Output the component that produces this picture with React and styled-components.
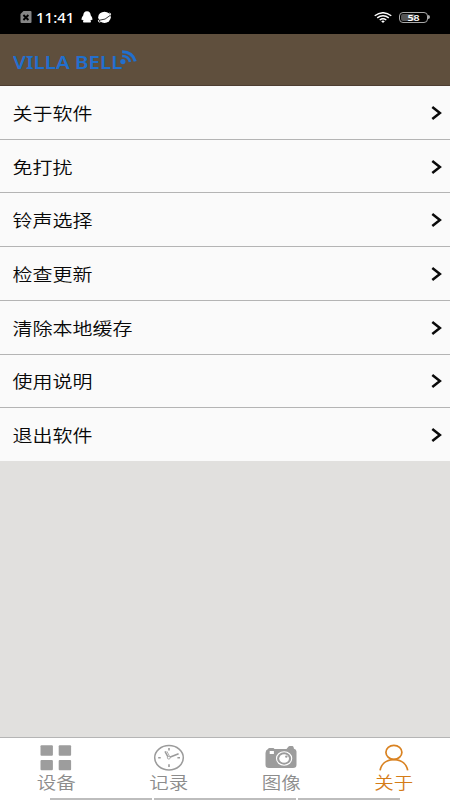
import React from 'react'
import styled, { createGlobalStyle } from 'styled-components'

const rows = ['关于软件', '免打扰', '铃声选择', '检查更新', '清除本地缓存', '使用说明', '退出软件']

const tabs = [
  { label: '设备', Icon: GridIcon },
  { label: '记录', Icon: ClockIcon },
  { label: '图像', Icon: CameraIcon },
  { label: '关于', Icon: PersonIcon, active: true },
]

export default function App() {
  return (
    <Screen>
      <GlobalStyle />
      <StatusBar>
        <SimIcon />
        <Time>11:41</Time>
        <PenguinIcon />
        <PlanetIcon />
        <Spacer />
        <WifiIcon />
        <Battery>
          <BatteryBody>
            <BatteryLevel />
            <BatteryText>58</BatteryText>
          </BatteryBody>
          <BatteryTip />
        </Battery>
      </StatusBar>
      <Header>
        <Brand>VILLA BELL</Brand>
        <SignalIcon />
      </Header>
      <List>
        {rows.map((row) => (
          <Row key={row}>
            <RowLabel>{row}</RowLabel>
            <ChevronIcon />
          </Row>
        ))}
      </List>
      <TabBar>
        {tabs.map(({ label, Icon, active }) => (
          <Tab key={label} $active={active}>
            <Icon />
            <TabLabel>{label}</TabLabel>
          </Tab>
        ))}
      </TabBar>
      <NavHints>
        <NavHint $width={102} />
        <NavHint $width={142} />
        <NavHint $width={102} />
      </NavHints>
    </Screen>
  )
}

function SimIcon() {
  return (
    <svg width="12" height="14" viewBox="0 0 12 14">
      <path d="M3.5 1H10.5Q11.5 1 11.5 2V12Q11.5 13 10.5 13H1.5Q.5 13 .5 12V4Z" fill="#858585" />
      <path d="M3.4 5L8.4 10M8.4 5L3.4 10" stroke="#000" strokeWidth="1.9" />
    </svg>
  )
}

function PenguinIcon() {
  return (
    <Penguin width="12" height="12" viewBox="0 0 12 12">
      <path
        d="M6 .3C8.5.3 9.7 2 9.7 4.3C11 6 11.6 7.4 11.4 8.8C11.2 9.5 10.5 9.2 10.1 8.8L9.5 9.7C10.2 10.2 10.2 11.2 9.2 11.5H2.8C1.8 11.2 1.8 10.2 2.5 9.7L1.9 8.8C1.5 9.2 .8 9.5.6 8.8C.4 7.4 1 6 2.3 4.3C2.3 2 3.5.3 6 .3Z"
        fill="#fff"
      />
    </Penguin>
  )
}

function PlanetIcon() {
  return (
    <Planet width="15" height="13" viewBox="0 0 15 13">
      <ellipse cx="7.5" cy="6.3" rx="6.3" ry="5.6" fill="#fff" />
      <path d="M1.4 9Q.8 11.2 3.2 11.3M12.2 2Q14 2 13.6 4" stroke="#fff" strokeWidth=".9" fill="none" />
      <path d="M2 9.3Q8.5 9.3 13.2 4.4" stroke="#000" strokeWidth=".8" fill="none" />
    </Planet>
  )
}

function WifiIcon() {
  return (
    <Wifi width="18" height="11" viewBox="0 0 18 11">
      <g fill="none" stroke="#fff" strokeWidth="1.4">
        <path d="M.7 3.7Q9-2.3 17.3 3.7" />
        <path d="M3.2 5.9Q9 1.5 14.8 5.9" />
        <path d="M5.7 8Q9 5.4 12.3 8" />
      </g>
      <path d="M7.2 9.2Q9 7.8 10.8 9.2L9 10.9Z" fill="#fff" />
    </Wifi>
  )
}

function SignalIcon() {
  return (
    <Signal width="20" height="18" viewBox="0 0 20 18">
      <circle cx="4.8" cy="12.6" r="2.6" fill="#226fce" />
      <g fill="none" stroke="#226fce">
        <path d="M4.1 7.1Q10.6 7.3 11.9 13" strokeWidth="2.5" />
        <path d="M4.1 2.7Q14.6 2.8 17.2 12.4" strokeWidth="3" />
      </g>
    </Signal>
  )
}

function ChevronIcon() {
  return (
    <svg width="11" height="14" viewBox="0 0 11 14">
      <path d="M1.3 1L8.9 7L1.3 13" fill="none" stroke="#0a0a0a" strokeWidth="2.5" />
    </svg>
  )
}

function GridIcon() {
  return (
    <svg width="32" height="28" viewBox="0 0 32 28">
      <g fill="#9d9d9d">
        <rect x=".5" y="1.2" width="12.4" height="10.5" rx="1" />
        <rect x="18.7" y="1.2" width="12.4" height="10.5" rx="1" />
        <rect x=".5" y="16" width="12.4" height="10.3" rx="1" />
        <rect x="18.7" y="16" width="12.4" height="10.3" rx="1" />
      </g>
    </svg>
  )
}

function ClockIcon() {
  return (
    <svg width="32" height="28" viewBox="0 0 32 28">
      <g fill="none" stroke="#9b9b9b">
        <ellipse cx="16" cy="13.7" rx="14.3" ry="12.2" strokeWidth="1.5" />
        <path d="M12 7.4L15.4 13.8L25.6 9.8" strokeWidth="1.5" />
        <path d="M13.8 7.2L16.4 12" strokeWidth=".8" />
        <circle cx="15.8" cy="13.7" r="1.4" strokeWidth=".8" fill="#fff" />
        <path d="M16 4V6.6M16 20.3V23M5.2 13.7H7.7M24.4 13.7H27" strokeWidth="1.6" />
      </g>
    </svg>
  )
}

function CameraIcon() {
  return (
    <svg width="32" height="28" viewBox="0 0 32 28">
      <path
        d="M3 5Q3.4 4 4.5 4H8.5L9.5 5H21.5L23.3 2.7Q23.8 2 24.8 2H27.2Q28.2 2 28.5 3L29 4.8Q31.5 5.2 31.5 7.5V20.8Q31.5 24 28 24H4Q.5 24 .5 20.8V9Q.5 6 3 5Z"
        fill="#9c9c9c"
      />
      <rect x="4.7" y="7" width="4.2" height="3" fill="#fff" />
      <ellipse cx="19.1" cy="14.5" rx="7.6" ry="6.7" fill="none" stroke="#fff" strokeWidth="1.1" />
      <ellipse cx="19.1" cy="14.5" rx="4.9" ry="4.3" fill="#fff" />
      <circle cx="21.3" cy="12.6" r="1.2" fill="#9c9c9c" />
    </svg>
  )
}

function PersonIcon() {
  return (
    <svg width="32" height="28" viewBox="0 0 32 28">
      <g fill="none" stroke="#d98221" strokeWidth="1.7">
        <ellipse cx="15.9" cy="8.3" rx="8" ry="7" />
        <path d="M2.1 26.4C3.4 19.4 9 15.6 15.9 15.6C22.8 15.6 28.3 19.4 29.7 26.4" />
      </g>
    </svg>
  )
}

const GlobalStyle = createGlobalStyle`
  * {
    box-sizing: border-box;
  }
  body {
    margin: 0;
    font-family: 'Noto Sans CJK SC', sans-serif;
  }
  svg {
    display: block;
    flex: none;
  }
`
const Screen = styled.div`
  display: flex;
  flex-direction: column;
  position: relative;
  width: 450px;
  height: 800px;
  overflow: hidden;
  background: #e1e0de;
`
const StatusBar = styled.div`
  display: flex;
  align-items: center;
  flex: none;
  height: 34px;
  padding: 0 20px;
  background: #000;
`
const Time = styled.span`
  width: 38px;
  margin-left: 4px;
  font-family: 'Noto Sans', sans-serif;
  font-size: 15px;
  font-weight: 500;
  line-height: 20px;
  color: #fff;
`
const Penguin = styled.svg`
  margin-left: 7px;
`
const Planet = styled.svg`
  margin-left: 4px;
`
const Spacer = styled.div`
  flex: 1;
`
const Wifi = styled.svg`
  margin-right: 7px;
`
const Battery = styled.div`
  display: flex;
  align-items: center;
`
const BatteryBody = styled.div`
  position: relative;
  width: 29px;
  height: 11px;
  border: 1px solid #aaa;
  border-radius: 4px;
`
const BatteryLevel = styled.div`
  width: 50%;
  height: 7px;
  margin: 1px;
  border-radius: 2px;
  background: #555;
`
const BatteryText = styled.span`
  position: absolute;
  inset: 0;
  font-family: 'Noto Sans', sans-serif;
  font-size: 9.5px;
  font-weight: 600;
  line-height: 9px;
  text-align: center;
  color: #fff;
  transform: scaleX(1.12);
`
const BatteryTip = styled.div`
  width: 2px;
  height: 4px;
  border-radius: 0 2px 2px 0;
  background: #aaa;
`
const Header = styled.header`
  display: flex;
  align-items: center;
  flex: none;
  height: 52px;
  padding: 5px 13px 0;
  border-bottom: 1px solid #4d3d31;
  background: #5f4f3d;
`
const Brand = styled.span`
  width: 105px;
  font-family: 'Noto Sans', sans-serif;
  font-size: 18px;
  font-weight: 600;
  line-height: 24px;
  white-space: nowrap;
  color: #226fce;
  transform: scaleX(1.14);
  transform-origin: left;
`
const Signal = styled.svg`
  margin-top: -9px;
`
const List = styled.div`
  display: flex;
  flex-direction: column;
  flex: none;
  height: 375px;
  background: #fafafa;
`
const Row = styled.div`
  display: flex;
  align-items: center;
  justify-content: space-between;
  flex: 1;
  padding: 1px 8px 0 12.5px;
  border-bottom: 1px solid #b4b4b4;
  &:last-child {
    border-bottom: 0;
  }
`
const RowLabel = styled.span`
  font-size: 20px;
  font-weight: 350;
  line-height: 24px;
  color: #080808;
  transform: scaleY(0.87);
`
const TabBar = styled.nav`
  display: flex;
  flex: none;
  height: 63px;
  margin-top: auto;
  border-top: 1px solid #b5b5b5;
  background: #fff;
`
const Tab = styled.div`
  display: flex;
  flex-direction: column;
  align-items: center;
  flex: 1;
  padding-top: 6px;
  color: ${(props) => (props.$active ? '#d57c18' : '#8c8c8c')};
`
const TabLabel = styled.span`
  margin-top: -1px;
  font-size: 19.5px;
  font-weight: 350;
  line-height: 22px;
  transform: scaleY(0.85);
`
const NavHints = styled.div`
  display: flex;
  gap: 2px;
  position: absolute;
  left: 50px;
  bottom: 0;
`
const NavHint = styled.div`
  width: ${(props) => props.$width}px;
  height: 2px;
  background: #bdbdbd;
`
